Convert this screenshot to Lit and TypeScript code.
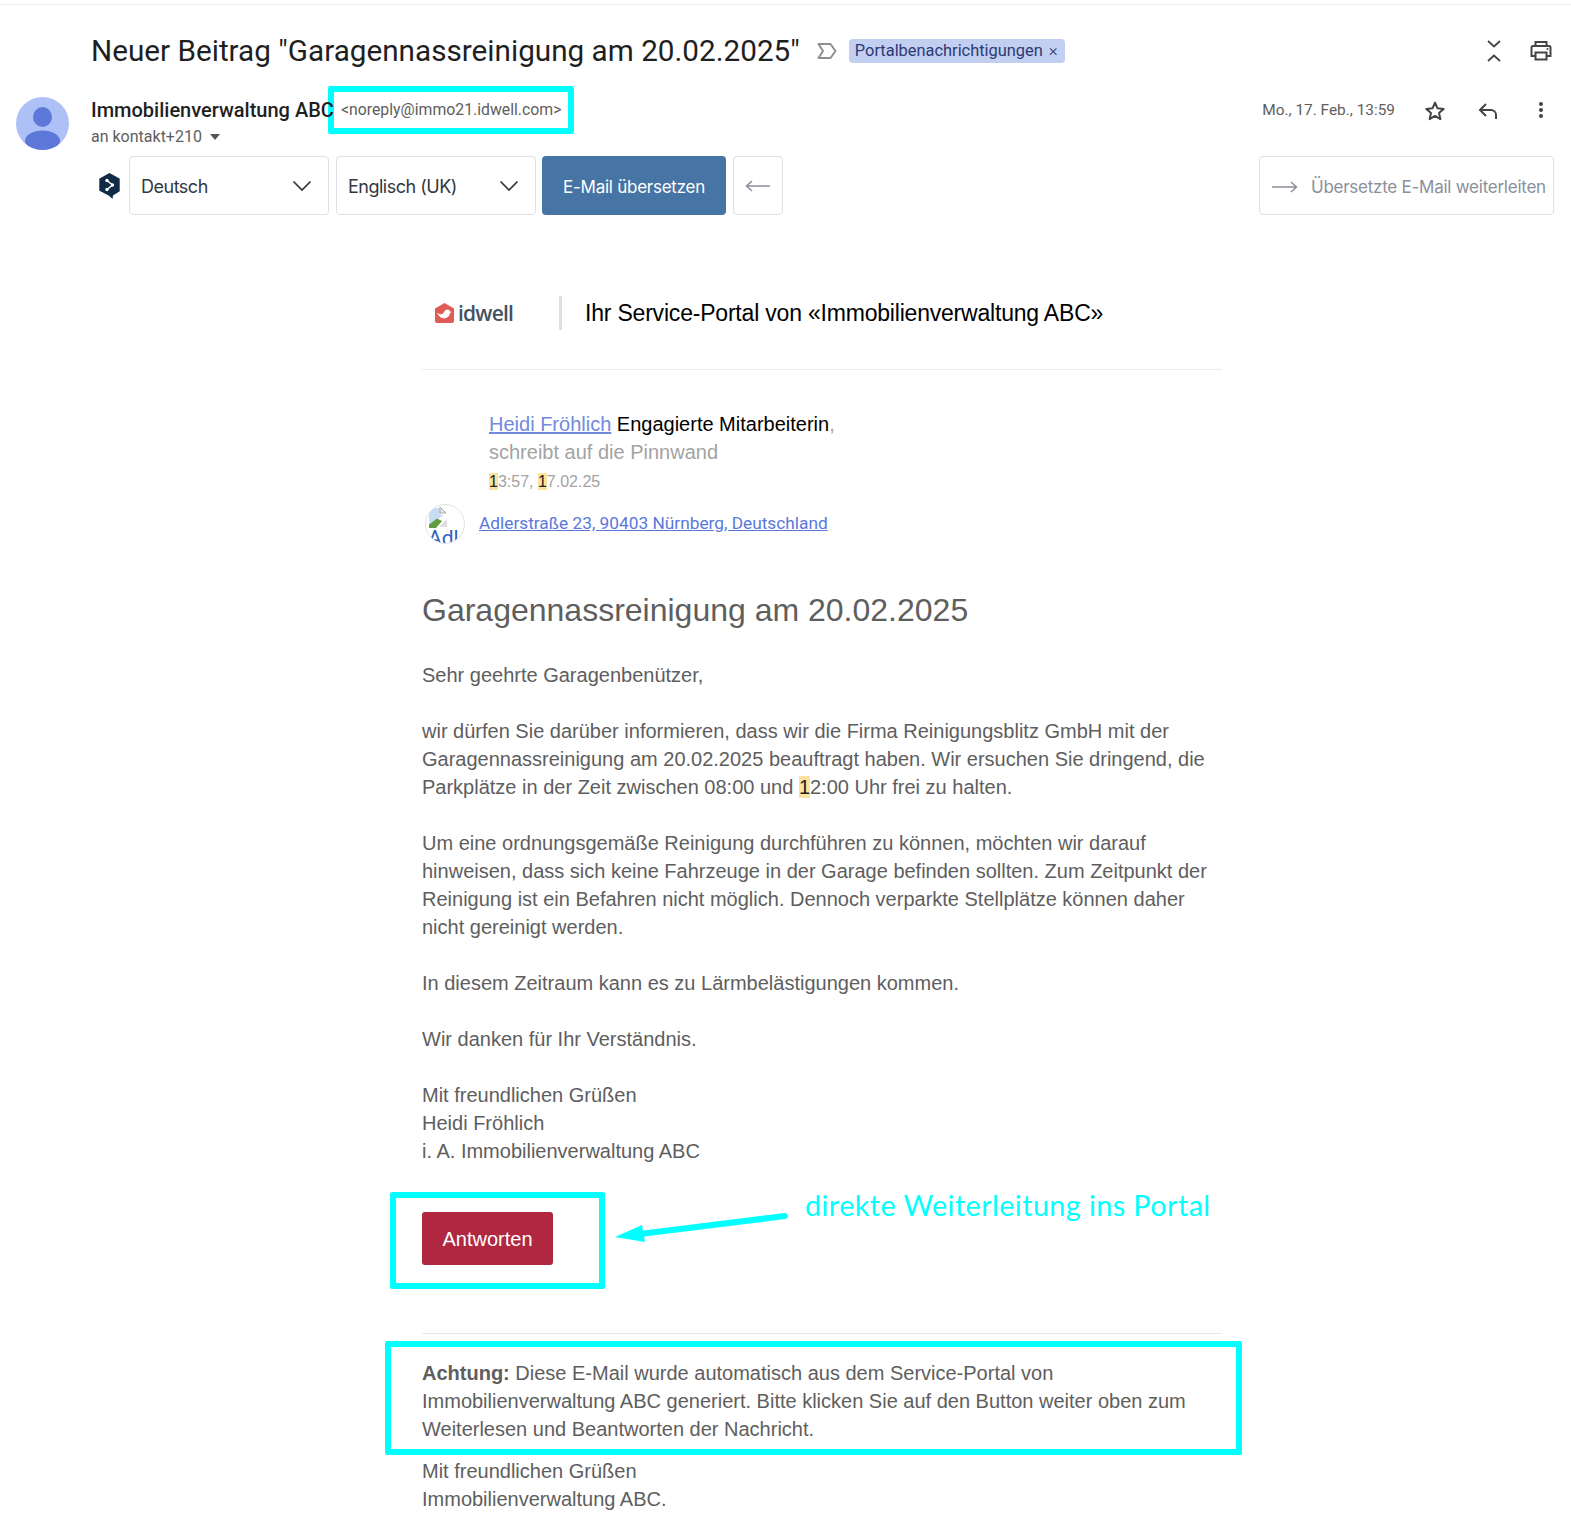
import { LitElement, css, html, svg } from "lit";
import { customElement } from "lit/decorators.js";

const chevron = svg`<svg class="chev" width="20" height="12" viewBox="0 0 20 12"><path d="M1.5 1.5 10 10l8.5-8.5" fill="none" stroke="#30343c" stroke-width="1.7"/></svg>`;

@customElement("app-root")
export class AppRoot extends LitElement {
  static styles = css`
    :host {
      display: block;
      position: relative;
      width: 1571px;
      height: 1521px;
      overflow: hidden;
      background: #fff;
      font-family: "Liberation Sans", Arial, sans-serif;
      color: #5e5e5e;
    }
    * {
      box-sizing: border-box;
    }
    .gmail {
      position: relative;
      z-index: 1;
      border-top: 1px solid #eee;
      margin-top: 4px;
      font-family: Roboto, sans-serif;
    }
    .subject {
      display: flex;
      align-items: center;
      height: 92px;
      padding: 0 19px 1px 91px;
    }
    .subject h1 {
      margin: 0;
      font-size: 29.7px;
      font-weight: 400;
      color: #1f1f1f;
      white-space: nowrap;
    }
    .label-mark {
      margin-left: 17px;
    }
    .chip {
      margin-left: 12px;
      height: 24px;
      padding: 0 7px 0 6px;
      display: flex;
      align-items: center;
      gap: 6px;
      background: #c2cff0;
      border-radius: 4px;
      color: #2c3a73;
      font-size: 16.4px;
      white-space: nowrap;
    }
    .chip span {
      font-size: 17px;
      font-weight: 300;
      line-height: 1;
    }
    .subject-tools {
      margin-left: auto;
      display: flex;
      align-items: center;
      gap: 29px;
    }
    .sender {
      display: grid;
      grid-template-columns: 53px 1fr auto;
      column-gap: 22px;
      padding: 0 25px 0 16px;
      height: 59px;
    }
    .avatar {
      width: 53px;
      height: 53px;
      border-radius: 50%;
      overflow: hidden;
    }
    .who {
      line-height: 1;
      padding-top: 1px;
    }
    .who b {
      display: block;
      font-size: 20px;
      font-weight: 500;
      color: #1f1f1f;
      height: 31px;
      line-height: 24px;
      white-space: nowrap;
    }
    .to {
      display: flex;
      align-items: center;
      gap: 8px;
      font-size: 16px;
      color: #5e5e5e;
    }
    .caret {
      width: 0;
      height: 0;
      border: 5px solid transparent;
      border-top: 6px solid #555;
      border-bottom: 0;
    }
    .when {
      display: flex;
      align-items: flex-start;
      gap: 29px;
      padding-top: 2px;
      font-size: 15.4px;
      color: #5e5e5e;
      white-space: nowrap;
    }
    .when > span {
      padding-top: 1px;
      line-height: 20px;
      margin-right: -1px;
    }
    .when svg:last-child {
      margin-left: 7px;
    }
    .translate {
      display: flex;
      align-items: stretch;
      height: 59px;
      padding: 0 17px 0 99px;
      font-family: Inter, sans-serif;
      font-size: 17px;
      letter-spacing: -0.25px;
    }
    .deepl {
      align-self: center;
      margin-right: 9px;
    }
    .box {
      display: flex;
      align-items: center;
      border: 1px solid #dfdfe6;
      border-radius: 4px;
      background: #fff;
      color: #333740;
    }
    .select {
      width: 200px;
      margin-right: 7px;
      padding: 1px 7px 0 11px;
      justify-content: space-between;
      font-size: 18px;
      letter-spacing: -0.5px;
    }
    .select + .select {
      margin-right: 6px;
    }
    .select .chev {
      margin-right: 9px;
    }
    .go {
      width: 184px;
      margin-right: 7px;
      padding-top: 2px;
      background: #4674a4;
      border-radius: 4px;
      color: #fff;
      display: flex;
      align-items: center;
      justify-content: center;
    }
    .back {
      width: 50px;
      justify-content: center;
    }
    .forward {
      margin-left: auto;
      width: 295px;
      padding: 2px 0 0 11px;
      gap: 13px;
      color: #8a8f9c;
      white-space: nowrap;
    }
    .forward svg {
      flex: none;
    }
    .mail {
      width: 800px;
      margin-left: 422px;
      padding-top: 62px;
      font-size: 20px;
      line-height: 28px;
    }
    .brand {
      display: flex;
      align-items: center;
      height: 71px;
      padding-bottom: 21px;
      box-sizing: content-box;
      border-bottom: 1px solid #eee;
    }
    .logo {
      width: 137px;
      display: flex;
      align-items: center;
      gap: 3px;
      padding-left: 12px;
      font-family: "Open Sans", sans-serif;
      font-size: 21px;
      font-weight: 600;
      letter-spacing: -0.8px;
      color: #44525f;
    }
    .logo svg {
      flex: none;
    }
    .rule {
      width: 3px;
      height: 34px;
      background: #e0e0e0;
      margin-right: 23px;
    }
    .brand h2 {
      margin: 0;
      font-size: 23px;
      letter-spacing: -0.2px;
      font-weight: 400;
      color: #000;
      white-space: nowrap;
    }
    .poster {
      padding: 40px 0 0 67px;
      color: #a3a3a3;
    }
    .poster a {
      color: #7189de;
      text-decoration: underline;
    }
    .poster strong {
      font-weight: 400;
      color: #000;
    }
    .stamp {
      font-size: 16px;
      line-height: 32px;
    }
    mark {
      background: #fbe29f;
      color: #222;
    }
    .place {
      display: flex;
      align-items: center;
      gap: 14px;
      margin: 6px 0 0 3px;
      height: 40px;
    }
    .place-img {
      position: relative;
      flex: none;
      width: 40px;
      height: 40px;
      border: 1px solid #e3e3e3;
      border-radius: 50%;
      overflow: hidden;
      background: #fff;
    }
    .place-img span {
      position: absolute;
      left: 2px;
      top: 21px;
      font-family: Roboto, sans-serif;
      font-size: 21px;
      line-height: 24px;
      color: #2e62c0;
      white-space: nowrap;
    }
    .place-img svg {
      position: absolute;
      left: 0;
      top: 0;
    }
    .place a {
      padding-bottom: 2px;
      font-family: Roboto, sans-serif;
      font-size: 17.3px;
      line-height: 20px;
      color: #5a78dc;
      text-decoration: underline;
    }
    .mail h3 {
      margin: 46px 0 31px;
      font-size: 32px;
      line-height: 40px;
      font-weight: 400;
      color: #5e5e5e;
    }
    .mail p {
      margin: 0 0 28px;
    }
    .reply {
      display: flex;
      align-items: center;
      justify-content: center;
      width: 131px;
      height: 53px;
      margin-top: 47px;
      background: #b02840;
      border-radius: 3px;
      color: #fff;
      font-size: 20px;
    }
    .divider {
      height: 1px;
      margin: 68px 0 25px;
      background: #e8e8e8;
    }
    .mail p.note {
      margin-bottom: 14px;
    }
    .note b {
      font-weight: 700;
    }
    .mark {
      position: absolute;
      border: 6px solid #00ffff;
      border-radius: 2px;
    }
    .mark-email {
      left: 328px;
      top: 86px;
      width: 246px;
      height: 48px;
      padding-left: 7px;
      background: #fff;
      font: 15.8px/36px Roboto, sans-serif;
      color: #5e5e5e;
      white-space: nowrap;
    }
    .mark-button {
      left: 390px;
      top: 1192px;
      width: 215px;
      height: 97px;
    }
    .mark-note {
      left: 385px;
      top: 1341px;
      width: 857px;
      height: 114px;
    }
    .caption {
      position: absolute;
      left: 805px;
      top: 1185px;
      font-family: Lato, sans-serif;
      font-size: 28.8px;
      line-height: 40px;
      letter-spacing: 0.4px;
      color: #00ffff;
      white-space: nowrap;
    }
    .pointer {
      position: absolute;
      left: 610px;
      top: 1205px;
    }
  `;

  render() {
    return html`
      <div class="gmail">
        <div class="subject">
          <h1>Neuer Beitrag "Garagennassreinigung am 20.02.2025"</h1>
          <svg class="label-mark" width="20" height="16" viewBox="0 0 20 16">
            <path d="M1.500 1h12l5 7-5 7h-12l4.500-7z" fill="none" stroke="#8f8f8f" stroke-width="2" stroke-linejoin="round"/>
          </svg>
          <div class="chip">Portalbenachrichtigungen <span>×</span></div>
          <div class="subject-tools">
            <svg width="14" height="24" viewBox="0 0 14 24">
              <path d="M1 2l6 5.500L13 2M1 22l6-5.500 6 5.500" fill="none" stroke="#444" stroke-width="1.800"/>
            </svg>
            <svg width="22" height="20" viewBox="0 0 22 20">
              <path d="M5.500 5V1h11v4M5.500 15H1.500V6.500A1.500 1.500 0 0 1 3 5h16a1.500 1.500 0 0 1 1.500 1.500V15h-4M5.500 11.500h11v7h-11z" fill="none" stroke="#444" stroke-width="2"/>
              <circle cx="17.500" cy="8" r="1" fill="#444"/>
            </svg>
          </div>
        </div>
        <div class="sender">
          <div class="avatar">
            <svg width="53" height="53" viewBox="0 0 53 53">
              <rect width="53" height="53" fill="#aec1f7"/>
              <ellipse cx="26.500" cy="20" rx="9.500" ry="10" fill="#5d78d8"/>
              <ellipse cx="26.500" cy="44" rx="17.500" ry="10.500" fill="#5d78d8"/>
            </svg>
          </div>
          <div class="who">
            <b>Immobilienverwaltung ABC</b>
            <div class="to">an kontakt+210 <i class="caret"></i></div>
          </div>
          <div class="when">
            <span>Mo., 17. Feb., 13:59</span>
            <svg width="24" height="24" viewBox="0 0 24 24">
              <path d="M12 3.600l2.500 5.700 6.200.6-4.700 4.100 1.400 6.100-5.400-3.200-5.400 3.200 1.400-6.100-4.700-4.100 6.200-.6z" fill="none" stroke="#444" stroke-width="2" stroke-linejoin="round"/>
            </svg>
            <svg width="24" height="24" viewBox="0 0 24 24">
              <path d="M10 5l-6 6 6 6M4.500 11H15a5 5 0 0 1 5 5v4" fill="none" stroke="#444" stroke-width="2"/>
            </svg>
            <svg width="10" height="24" viewBox="0 0 10 24">
              <circle cx="5" cy="5" r="2" fill="#444"/>
              <circle cx="5" cy="11" r="2" fill="#444"/>
              <circle cx="5" cy="17" r="2" fill="#444"/>
            </svg>
          </div>
        </div>
        <div class="translate">
          <svg class="deepl" width="21" height="26" viewBox="0 0 21 26">
            <path d="M10.500 0 20 5.200a1 1 0 0 1 .7 1v11.600a1 1 0 0 1-.7 1L14 22.500 13.500 26 10 22.800 1 18a1 1 0 0 1-.7-1V6.200a1 1 0 0 1 .7-1z" fill="#0f2b46"/>
            <path d="M8 7.500 13.500 12 8 16.500" fill="none" stroke="#fff" stroke-width="1.500"/>
            <circle cx="8" cy="7.500" r="1.700" fill="#fff"/>
            <circle cx="13.500" cy="12" r="1.700" fill="#fff"/>
            <circle cx="8" cy="16.500" r="1.700" fill="#fff"/>
          </svg>
          <div class="box select">Deutsch ${chevron}</div>
          <div class="box select">Englisch (UK) ${chevron}</div>
          <div class="go">E-Mail übersetzen</div>
          <div class="box back">
            <svg width="26" height="12" viewBox="0 0 26 12">
              <path d="M25 6H2M7 1 1.500 6 7 11" fill="none" stroke="#8a8f9c" stroke-width="1.500"/>
            </svg>
          </div>
          <div class="box forward">
            <svg width="27" height="12" viewBox="0 0 27 12">
              <path d="M1 6h24M20 1l5.500 5L20 11" fill="none" stroke="#8a8f9c" stroke-width="1.500"/>
            </svg>
            Übersetzte E-Mail weiterleiten
          </div>
        </div>
      </div>

      <div class="mail">
        <div class="brand">
          <div class="logo">
            <svg width="21" height="20" viewBox="0 0 21 20">
              <path d="M10.500 0 20 5.500V18a2 2 0 0 1-2 2H3a2 2 0 0 1-2-2V5.500z" fill="#df5b57"/>
              <path d="M3 9.500c3 2.500 5 2.200 6.500.4 1-1.900 2-3.400 4-3.400 1.500 0 2.500 1 2.500 2l2 .5-2 .8c-.5 4-3.500 6-7 5.500-3-.5-5-3-6-5.800z" fill="#fff"/>
            </svg>
            idwell
          </div>
          <div class="rule"></div>
          <h2>Ihr Service-Portal von «Immobilienverwaltung ABC»</h2>
        </div>
        <div class="poster">
          <div>
            <a>Heidi Fröhlich</a> <strong>Engagierte Mitarbeiterin</strong>,
          </div>
          <div>schreibt auf die Pinnwand</div>
          <div class="stamp"><mark>1</mark>3:57, <mark>1</mark>7.02.25</div>
        </div>
        <div class="place">
          <div class="place-img">
            <svg width="24" height="24" viewBox="0 0 24 24">
              <path d="M3 3h11v6l3 2-14 8z" fill="#c9dcf5"/>
              <path d="M3 19.500l8-6 5 2.500-6 7H3z" fill="#5f9e3f"/>
              <path d="M14 2l6 6h-6z" fill="#e9e9e9" stroke="#a8a8a8"/>
              <path d="M21 14v8h-8z" fill="#dedede"/>
            </svg>
            <span>Adlerstraße</span>
          </div>
          <a>Adlerstraße 23, 90403 Nürnberg, Deutschland</a>
        </div>
        <h3>Garagennassreinigung am 20.02.2025</h3>
        <p>Sehr geehrte Garagenbenützer,</p>
        <p>
          wir dürfen Sie darüber informieren, dass wir die Firma Reinigungsblitz GmbH mit der
          Garagennassreinigung am 20.02.2025 beauftragt haben. Wir ersuchen Sie dringend, die
          Parkplätze in der Zeit zwischen 08:00 und <mark>1</mark>2:00 Uhr frei zu halten.
        </p>
        <p>
          Um eine ordnungsgemäße Reinigung durchführen zu können, möchten wir darauf
          hinweisen, dass sich keine Fahrzeuge in der Garage befinden sollten. Zum Zeitpunkt der
          Reinigung ist ein Befahren nicht möglich. Dennoch verparkte Stellplätze können daher
          nicht gereinigt werden.
        </p>
        <p>In diesem Zeitraum kann es zu Lärmbelästigungen kommen.</p>
        <p>Wir danken für Ihr Verständnis.</p>
        <p>Mit freundlichen Grüßen<br />Heidi Fröhlich<br />i. A. Immobilienverwaltung ABC</p>
        <div class="reply">Antworten</div>
        <div class="divider"></div>
        <p class="note">
          <b>Achtung:</b> Diese E-Mail wurde automatisch aus dem Service-Portal von
          Immobilienverwaltung ABC generiert. Bitte klicken Sie auf den Button weiter oben zum
          Weiterlesen und Beantworten der Nachricht.
        </p>
        <p>Mit freundlichen Grüßen<br />Immobilienverwaltung ABC.</p>
      </div>

      <div class="mark mark-email">&lt;noreply@immo21.idwell.com&gt;</div>
      <div class="mark mark-button"></div>
      <div class="mark mark-note"></div>
      <div class="caption">direkte Weiterleitung ins Portal</div>
      <svg class="pointer" width="180" height="40" viewBox="0 0 180 40">
        <path d="M175 11 30 29" stroke="#00ffff" stroke-width="6" stroke-linecap="round"/>
        <path d="M5 32 32 20l3 17z" fill="#00ffff"/>
      </svg>
    `;
  }
}
